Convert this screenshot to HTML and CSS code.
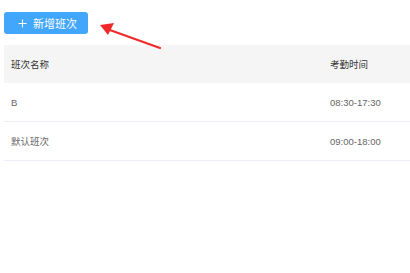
FILE: index.html
```html
<!DOCTYPE html>
<html>
<head>
<meta charset="utf-8">
<link rel="stylesheet" href="styles.css">
</head>
<body>
<div class="page">
  <div class="toolbar">
    <button class="btn-add"><svg class="plus" width="9" height="9" viewBox="0 0 9 9"><path d="M4.5 0.5V8.5M0.5 4.5H8.5" stroke="#fff" stroke-width="1.1"/></svg>新增班次</button>
  </div>
  <div class="table">
    <div class="row head">
      <div class="c-name">班次名称</div>
      <div class="c-time">考勤时间</div>
    </div>
    <div class="row">
      <div class="c-name">B</div>
      <div class="c-time">08:30-17:30</div>
    </div>
    <div class="row">
      <div class="c-name">默认班次</div>
      <div class="c-time">09:00-18:00</div>
    </div>
  </div>
  <svg class="arrow" width="70" height="30" viewBox="0 0 70 30">
    <line x1="61" y1="28" x2="8" y2="9" stroke="#ef2a2a" stroke-width="2.2" stroke-linecap="round"/>
    <polygon points="1,5 15,3 9,15" fill="#ef2a2a"/>
  </svg>
</div>
</body>
</html>
```

FILE: styles.css
```css
html, body {
  margin: 0;
  padding: 0;
  background: #fff;
  font-family: "Liberation Sans", "Noto Sans CJK SC", sans-serif;
}
.page {
  position: relative;
  padding: 12px 0 0 4px;
}
.toolbar {
  height: 22px;
  display: flex;
}
.btn-add {
  height: 22px;
  width: 84px;
  border: none;
  border-radius: 3px;
  background: #42a6fa;
  color: #fff;
  font-family: "Liberation Sans", "Noto Sans CJK SC", sans-serif;
  font-size: 11px;
  padding: 0 0 0 14px;
  display: flex;
  align-items: center;
}
.plus {
  margin-right: 6px;
  display: block;
}
.table {
  margin-top: 11px;
}
.row {
  display: flex;
  align-items: center;
  height: 38px;
  border-bottom: 1px solid #ebeef5;
  font-size: 9.5px;
  color: #666;
}
.row.head {
  background: #f5f5f5;
  border-bottom: none;
  height: 38px;
  color: #333;
}
.c-name {
  box-sizing: border-box;
  width: 326px;
  padding-left: 7px;
}
.c-time {
  flex: 1;
}
.arrow {
  position: absolute;
  left: 99px;
  top: 20px;
}
```
